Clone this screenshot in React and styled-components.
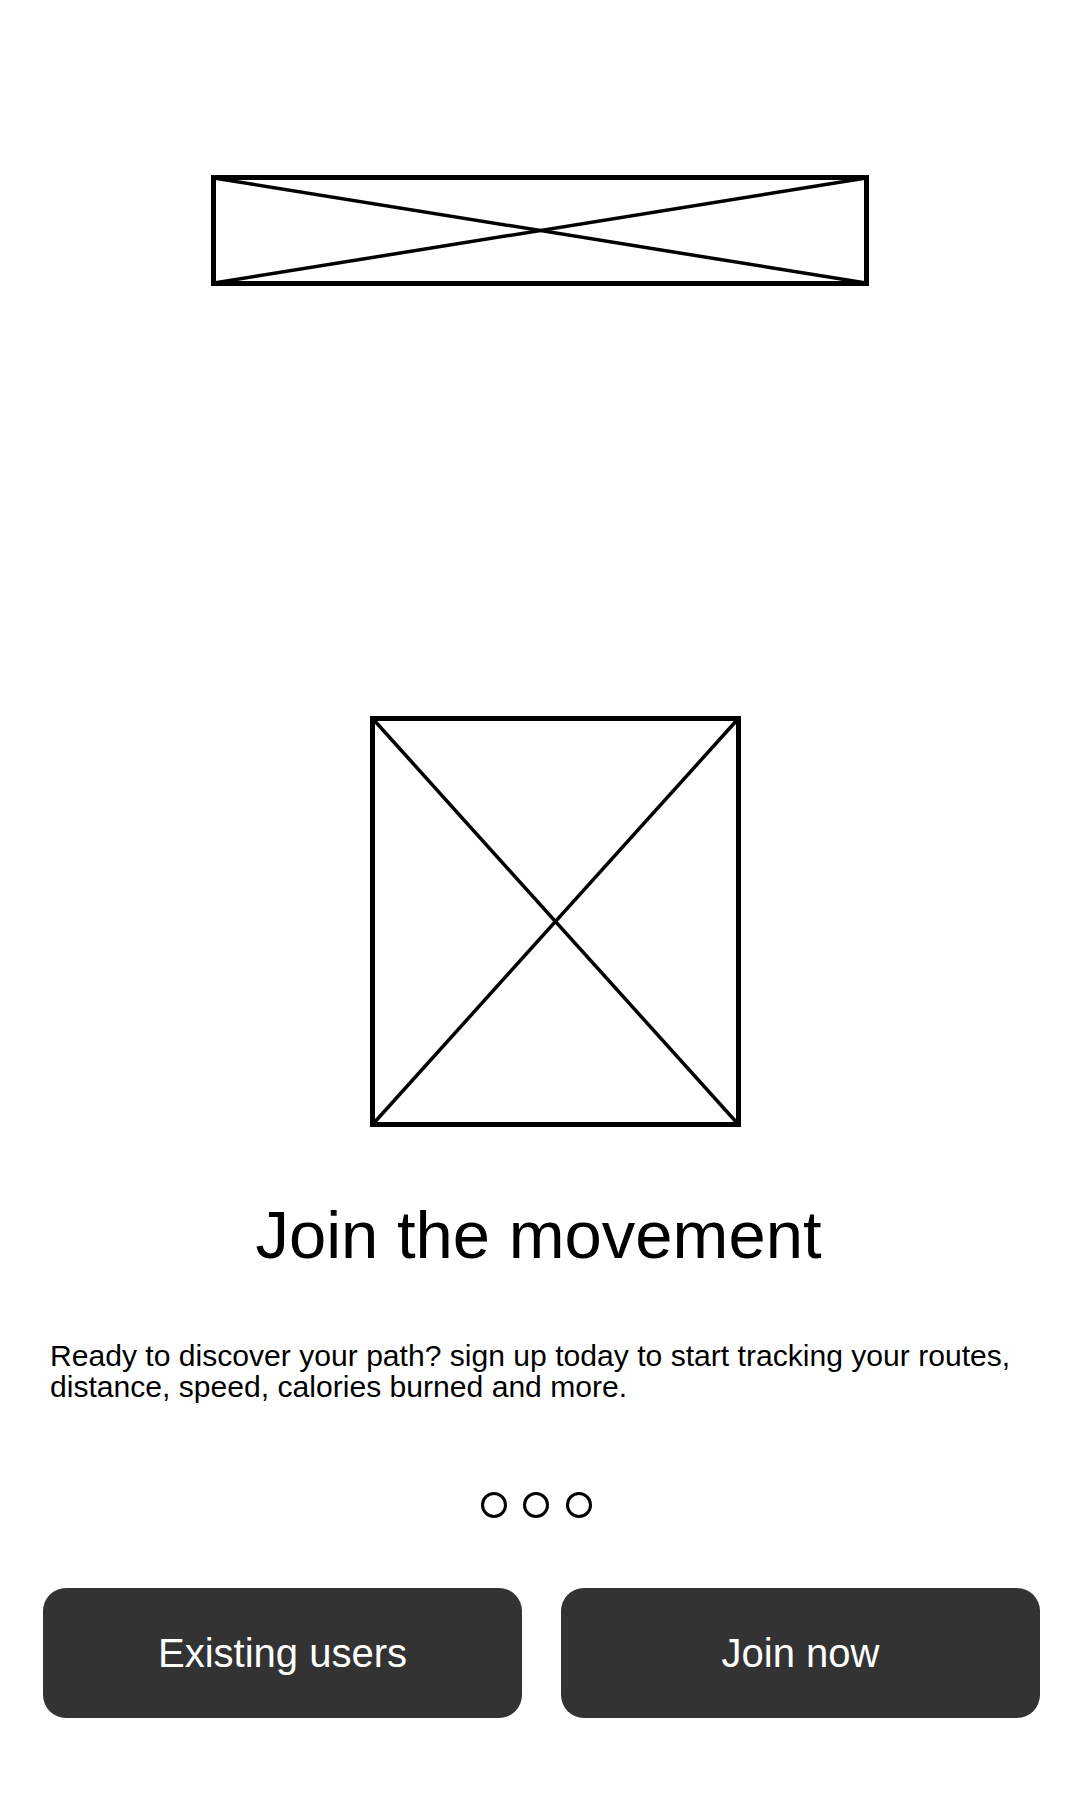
import React from "react";
import styled, { createGlobalStyle } from "styled-components";

const Global = createGlobalStyle`
  html, body { margin: 0; padding: 0; background: #ffffff; }
  body { font-family: "Liberation Sans", Arial, sans-serif; color: #000; }
`;

const Page = styled.div`
  width: 1080px;
  min-height: 1800px;
  display: flex;
  flex-direction: column;
  padding-top: 175px;
  box-sizing: border-box;
`;

const Banner = styled.svg`
  display: block;
  align-self: center;
  width: 658px;
  height: 111px;
`;

const Hero = styled.svg`
  display: block;
  margin-top: 430px;
  margin-left: 370px;
  width: 371px;
  height: 411px;
`;

const Title = styled.h1`
  margin: 74px 0 0;
  padding-right: 3px;
  font-size: 67px;
  line-height: 67px;
  font-weight: 400;
  text-align: center;
`;

const Body = styled.p`
  margin: 72px 0 0;
  padding: 0 50px;
  font-size: 30.1px;
  line-height: 31px;
`;

const Dots = styled.div`
  margin-top: 90px;
  display: flex;
  justify-content: center;
  gap: 16.5px;
  padding-left: 0;
  padding-right: 8px;
`;

const Dot = styled.span`
  width: 26px;
  height: 26px;
  box-sizing: border-box;
  border: 3px solid #000;
  border-radius: 50%;
  background: ${(p) => (p.$active ? "#000" : "transparent")};
`;

const Actions = styled.div`
  margin-top: 70px;
  padding: 0 40px 0 43px;
  display: grid;
  grid-template-columns: 1fr 1fr;
  gap: 39px;
`;

const Button = styled.button`
  height: 130px;
  border: none;
  border-radius: 23px;
  background: #333333;
  color: #ffffff;
  font-family: "Liberation Sans", Arial, sans-serif;
  font-size: 40px;
  cursor: pointer;
`;

const Placeholder = ({ as: Comp, w, h }) => (
  <Comp viewBox={`0 0 ${w} ${h}`}>
    <rect x="2.5" y="2.5" width={w - 5} height={h - 5} fill="none" stroke="#000" strokeWidth="5" />
    <line x1="3" y1="3" x2={w - 3} y2={h - 3} stroke="#000" strokeWidth="3.5" />
    <line x1="3" y1={h - 3} x2={w - 3} y2="3" stroke="#000" strokeWidth="3.5" />
  </Comp>
);

export default function App() {
  return (
    <>
      <Global />
      <Page>
        <Placeholder as={Banner} w={658} h={111} />
        <Placeholder as={Hero} w={371} h={411} />
        <Title>Join the movement</Title>
        <Body>
          Ready to discover your path? sign up today to start tracking your routes,
          distance, speed, calories burned and more.
        </Body>
        <Dots>
          <Dot />
          <Dot />
          <Dot />
        </Dots>
        <Actions>
          <Button>Existing users</Button>
          <Button>Join now</Button>
        </Actions>
      </Page>
    </>
  );
}
